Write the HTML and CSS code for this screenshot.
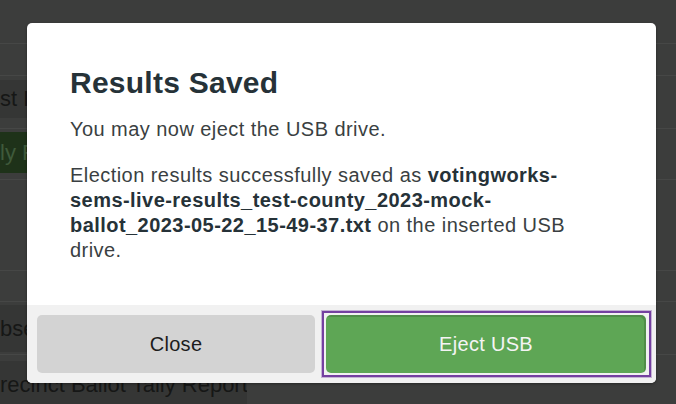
FILE: index.html
```html
<!DOCTYPE html>
<html lang="en">
<head>
<meta charset="utf-8">
<title>Results Saved</title>
<link rel="stylesheet" href="styles.css">
</head>
<body>
<div class="page">
  <div class="row row-a"></div>
  <div class="row row-b"></div>
  <div class="row row-c"><div class="band band-gray band-c">st F</div></div>
  <div class="row row-d"><div class="band band-green">ly R</div></div>
  <div class="row row-e"></div>
  <div class="row row-f"></div>
  <div class="row row-g"><div class="band band-gray band-g">bse</div></div>
  <div class="row row-h"><div class="band band-gray band-h">recinct Ballot Tally Report</div></div>
</div>

<div class="overlay">
  <div class="modal" role="dialog" aria-labelledby="modal-title">
    <div class="modal-body">
      <h1 id="modal-title" class="modal-title">Results Saved</h1>
      <p class="modal-text">You may now eject the USB drive.</p>
      <p class="modal-text modal-text-wrap">Election results successfully saved as <strong class="filename">votingworks-sems-live-results_test-county_2023-mock-ballot_2023-05-22_15-49-37.txt</strong> on the inserted USB drive.</p>
    </div>
    <div class="modal-footer">
      <button class="btn btn-secondary" type="button">Close</button>
      <button class="btn btn-primary" type="button">Eject USB</button>
    </div>
  </div>
</div>
</body>
</html>
```
FILE: styles.css
```css
html, body {
  margin: 0;
  padding: 0;
}

body {
  width: 676px;
  height: 404px;
  overflow: hidden;
  position: relative;
  background: #3c3d3c;
  font-family: "Liberation Sans", Arial, sans-serif;
}

/* dimmed page behind the modal */
.page {
  display: flex;
  flex-direction: column;
}

.row {
  border-bottom: 1px solid #464746;
  box-sizing: border-box;
  display: flex;
  align-items: center;
}

.row-a { height: 44px; }
.row-b { height: 32px; }
.row-c { height: 53px; align-items: flex-start; padding-top: 4px; }
.row-d { height: 51px; align-items: flex-start; padding-top: 3px; }
.row-e { height: 91px; }
.row-f { height: 31px; }
.row-g { height: 53px; align-items: flex-start; padding-top: 3px; }
.row-h { height: 50px; border-bottom: none; align-items: flex-start; padding-top: 6px; }

.band {
  box-sizing: border-box;
  white-space: nowrap;
  overflow: hidden;
  font-size: 22px;
  display: flex;
  align-items: center;
}

.band-gray {
  background: #353635;
  color: #161716;
}

.band-c { width: 30px; height: 38px; }
.band-g { width: 30px; height: 47px; }
.band-h {
  width: 247px;
  height: 44px;
  border-radius: 0 5px 0 0;
  padding-top: 4px;
}

.band-green {
  width: 30px;
  height: 41px;
  background: #1e3219;
  color: #3f5a3b;
}

/* modal */
.overlay {
  position: absolute;
  inset: 0;
  padding: 23px 0 0 27px;
}

.modal {
  width: 629px;
  height: 360px;
  background: #ffffff;
  border-radius: 5px;
  overflow: hidden;
  display: flex;
  flex-direction: column;
  box-shadow: 0 1px 3px rgba(0, 0, 0, 0.35);
}

.modal-body {
  flex: 1;
  padding: 42px 42px 0 43px;
  color: #3a3f42;
}

.modal-title {
  margin: 0 0 16px;
  font-size: 30px;
  line-height: 36px;
  font-weight: 700;
  color: #263238;
  letter-spacing: 0.25px;
}

.modal-text {
  margin: 0 0 21px;
  font-size: 20px;
  line-height: 25px;
  letter-spacing: 0.45px;
}

.modal-text-wrap {
  max-width: 530px;
}

.filename {
  font-weight: 700;
  color: #263238;
}

.modal-footer {
  background: #f1f1f1;
  padding: 10px;
  display: flex;
  gap: 11px;
}

.btn {
  height: 58px;
  border: none;
  border-radius: 5px;
  font-family: "Liberation Sans", Arial, sans-serif;
  font-size: 20px;
  letter-spacing: 0.3px;
  cursor: pointer;
}

.btn-secondary {
  flex: 0 0 278px;
  background: #d3d3d3;
  color: #1c1c1c;
}

.btn-primary {
  position: relative;
  flex: 1 1 auto;
  background: #5ea655;
  color: #f4f4f4;
  outline: none;
  box-shadow: inset -2px 2px 0 rgba(0, 0, 0, 0.15);
}

/* focus ring drawn over the button */
.btn-primary::after {
  content: "";
  position: absolute;
  top: -4px;
  right: -5px;
  bottom: -4px;
  left: -4px;
  border: 2px solid #7440a0;
  box-shadow: 0 0 0 1px rgba(116, 64, 160, 0.35);
  pointer-events: none;
}
```
